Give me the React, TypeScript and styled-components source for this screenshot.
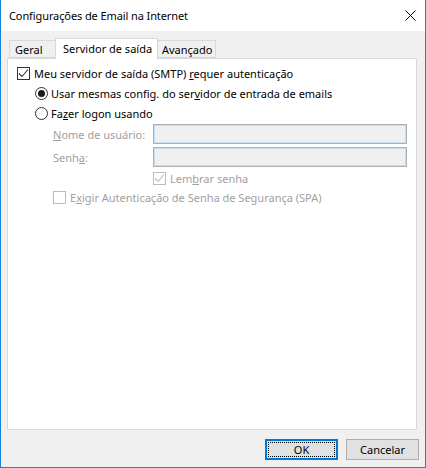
import React from "react";
import styled, { createGlobalStyle } from "styled-components";

const GlobalStyle = createGlobalStyle`
  html, body {
    margin: 0;
    padding: 0;
    background: #ffffff;
  }
  * {
    box-sizing: border-box;
  }
`;

const FONT = `"Segoe UI", "Noto Sans", "Liberation Sans", sans-serif`;

const Window = styled.div`
  width: 426px;
  height: 468px;
  display: flex;
  flex-direction: column;
  border: 1px solid #1883d7;
  border-top: none;
  font-family: ${FONT};
  font-size: 11px;
  color: #000;
`;

const TitleBar = styled.div`
  height: 31px;
  flex: none;
  display: flex;
  align-items: center;
  justify-content: space-between;
  padding: 0 9px 0 8px;
  background: #fff;
`;

const Title = styled.span`
  font-size: 11px;
  letter-spacing: -0.1px;
  color: #000;
`;

const Body = styled.div`
  flex: 1;
  display: flex;
  flex-direction: column;
  background: #f0f0f0;
  padding: 7px 8px 7px 6px;
`;

const TabStrip = styled.div`
  display: flex;
  align-items: flex-end;
  padding-left: 2px;
  position: relative;
  z-index: 1;
  margin-bottom: -1px;
`;

// Windows tab: the selected one stands taller and covers the panel edge
const Tab = styled.div<{ $width: number; $pad: number; $active?: boolean }>`
  width: ${(p) => p.$width}px;
  height: ${(p) => (p.$active ? 21 : 18)}px;
  padding-left: ${(p) => p.$pad}px;
  display: flex;
  align-items: center;
  background: ${(p) => (p.$active ? "#fff" : "#f0f0f0")};
  border: 1px solid #d9d9d9;
  border-bottom: ${(p) => (p.$active ? "none" : "1px solid #d9d9d9")};
  margin-bottom: ${(p) => (p.$active ? 0 : 1)}px;
  padding-bottom: ${(p) => (p.$active ? 2 : 0)}px;
  white-space: nowrap;
`;

const Panel = styled.div`
  flex: 1;
  background: #fff;
  border: 1px solid #d9d9d9;
  padding: 4px 9px 0 9px;
  display: flex;
  flex-direction: column;
`;

const Row = styled.div<{ $indent?: number; $disabled?: boolean }>`
  height: 20px;
  display: flex;
  align-items: center;
  margin-left: ${(p) => p.$indent ?? 0}px;
  color: ${(p) => (p.$disabled ? "#a0a0a0" : "#000")};
  white-space: nowrap;
`;

const FieldRow = styled.div<{ $top: number }>`
  display: flex;
  align-items: center;
  margin-left: 36px;
  margin-top: ${(p) => p.$top}px;
  color: #a0a0a0;
  white-space: nowrap;
`;

const FieldLabel = styled.span`
  width: 100px;
  flex: none;
`;

const TextBox = styled.div`
  width: 257px;
  height: 20px;
  background: #f0f0f0;
  border: 1px solid #abafb6;
  box-shadow: inset 0 0 0 1px #c6def4;
`;

const Box = styled.span<{ $disabled?: boolean }>`
  width: 13px;
  height: 13px;
  flex: none;
  display: inline-flex;
  align-items: center;
  justify-content: center;
  border: 1px solid ${(p) => (p.$disabled ? "#bcbcbc" : "#333333")};
  background: #fff;
  margin-right: 4px;
`;

const Radio = styled.span<{ $checked?: boolean }>`
  width: 13px;
  height: 13px;
  flex: none;
  border-radius: 50%;
  border: 1px solid #333333;
  background: #fff;
  display: inline-flex;
  align-items: center;
  justify-content: center;
  margin-right: 3px;

  &::after {
    content: "";
    display: ${(p) => (p.$checked ? "block" : "none")};
    width: 7px;
    height: 7px;
    border-radius: 50%;
    background: #1a1a1a;
  }
`;

const Footer = styled.div`
  display: flex;
  justify-content: flex-end;
  gap: 8px;
  margin-top: 9px;
  margin-right: -2px;
`;

const Button = styled.button<{ $default?: boolean }>`
  width: 73px;
  height: 21px;
  padding: 0;
  font-family: ${FONT};
  font-size: 11px;
  color: #000;
  background: #e1e1e1;
  border: ${(p) => (p.$default ? "2px solid #0078d7" : "1px solid #adadad")};
  position: relative;
  display: flex;
  align-items: center;
  justify-content: center;
`;

const FocusRing = styled.span`
  position: absolute;
  inset: 1px;
  border: 1px dotted #000;
`;

function Check({ color }: { color: string }) {
  return (
    <svg width="11" height="11" viewBox="0 0 11 11">
      <path d="M1 5.5 L4 8.5 L10 1.5" fill="none" stroke={color} strokeWidth="1.1" />
    </svg>
  );
}

function CloseIcon() {
  return (
    <svg width="11" height="11" viewBox="0 0 11 11">
      <path d="M0.5 0.5 L10.5 10.5 M10.5 0.5 L0.5 10.5" stroke="#000" strokeWidth="1" />
    </svg>
  );
}

export default function App() {
  return (
    <>
      <GlobalStyle />
      <Window>
        <TitleBar>
          <Title>Configurações de Email na Internet</Title>
          <CloseIcon />
        </TitleBar>
        <Body>
          <TabStrip>
            <Tab $width={46} $pad={5} style={{ borderRight: "none" }}>
              Geral
            </Tab>
            <Tab $width={103} $pad={7} $active>
              Servidor de saída
            </Tab>
            <Tab $width={58} $pad={4} style={{ borderLeft: "none" }}>
              Avançado
            </Tab>
          </TabStrip>
          <Panel>
            <Row>
              <Box>
                <Check color="#333" />
              </Box>
              <span>
                Meu servidor de saída (SMTP) <u>r</u>equer autenticação
              </span>
            </Row>
            <Row $indent={18}>
              <Radio $checked />
              <span>
                Usar mesmas config. do ser<u>v</u>idor de entrada de emails
              </span>
            </Row>
            <Row $indent={18}>
              <Radio />
              <span>
                Fa<u>z</u>er logon usando
              </span>
            </Row>
            <FieldRow $top={1}>
              <FieldLabel>
                <u>N</u>ome de usuário:
              </FieldLabel>
              <TextBox />
            </FieldRow>
            <FieldRow $top={3}>
              <FieldLabel>
                Senh<u>a</u>:
              </FieldLabel>
              <TextBox />
            </FieldRow>
            <Row $indent={136} $disabled style={{ marginTop: 1 }}>
              <Box $disabled>
                <Check color="#bcbcbc" />
              </Box>
              <span>
                Lem<u>b</u>rar senha
              </span>
            </Row>
            <Row $indent={36} $disabled style={{ marginTop: -1 }}>
              <Box $disabled />
              <span>
                E<u>x</u>igir Autenticação de Senha de Segurança (SPA)
              </span>
            </Row>
          </Panel>
          <Footer>
            <Button $default>
              <FocusRing />
              OK
            </Button>
            <Button>Cancelar</Button>
          </Footer>
        </Body>
      </Window>
    </>
  );
}
